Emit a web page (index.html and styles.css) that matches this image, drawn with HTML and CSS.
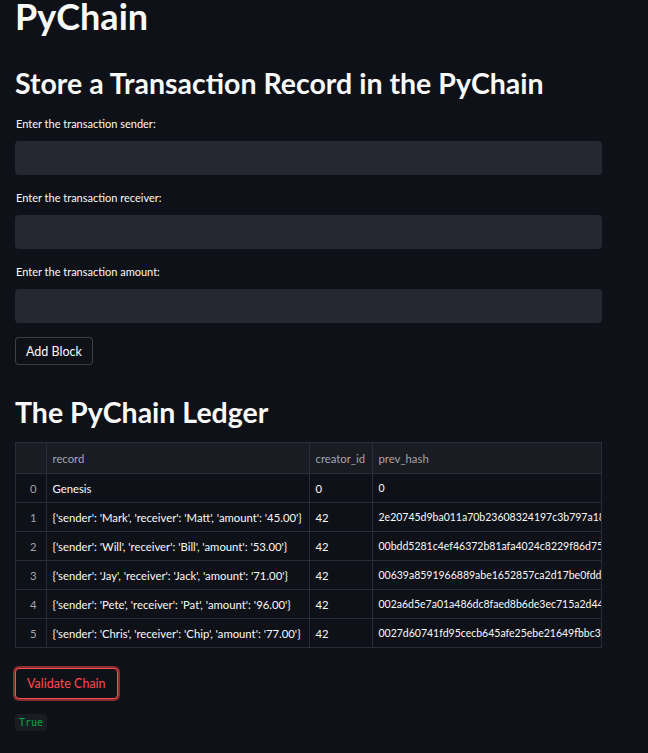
FILE: index.html
```html
<!DOCTYPE html>
<html>
<head>
<meta charset="utf-8">
<link rel="stylesheet" href="styles.css">
</head>
<body>
<main class="app">
  <h1 class="title">PyChain</h1>
  <h2 class="subtitle">Store a Transaction Record in the PyChain</h2>
  <div class="field first">
    <label class="label">Enter the transaction sender:</label>
    <div class="input"></div>
  </div>
  <div class="field">
    <label class="label">Enter the transaction receiver:</label>
    <div class="input"></div>
  </div>
  <div class="field">
    <label class="label">Enter the transaction amount:</label>
    <div class="input"></div>
  </div>
  <button class="btn">Add Block</button>
  <h2 class="subtitle ledger">The PyChain Ledger</h2>
  <div class="table-wrap">
    <table class="grid">
      <colgroup><col class="c-idx"><col class="c-rec"><col class="c-cre"><col class="c-hash"></colgroup>
      <thead>
        <tr><th></th><th>record</th><th>creator_id</th><th>prev_hash</th></tr>
      </thead>
      <tbody>
        <tr><td class="idx">0</td><td>Genesis</td><td>0</td><td class="hash">0</td></tr>
        <tr><td class="idx">1</td><td>{'sender': 'Mark', 'receiver': 'Matt', 'amount': '45.00'}</td><td>42</td><td class="hash">2e20745d9ba011a70b23608324197c3b797a18e4</td></tr>
        <tr><td class="idx">2</td><td>{'sender': 'Will', 'receiver': 'Bill', 'amount': '53.00'}</td><td>42</td><td class="hash">00bdd5281c4ef46372b81afa4024c8229f86d759a</td></tr>
        <tr><td class="idx">3</td><td>{'sender': 'Jay', 'receiver': 'Jack', 'amount': '71.00'}</td><td>42</td><td class="hash">00639a8591966889abe1652857ca2d17be0fdd3b</td></tr>
        <tr><td class="idx">4</td><td>{'sender': 'Pete', 'receiver': 'Pat', 'amount': '96.00'}</td><td>42</td><td class="hash">002a6d5e7a01a486dc8faed8b6de3ec715a2d44c</td></tr>
        <tr><td class="idx">5</td><td>{'sender': 'Chris', 'receiver': 'Chip', 'amount': '77.00'}</td><td>42</td><td class="hash">0027d60741fd95cecb645afe25ebe21649fbbc3fa</td></tr>
      </tbody>
    </table>
  </div>
  <button class="btn btn-focus">Validate Chain</button>
  <div class="result"><code class="code">True</code></div>
</main>
</body>
</html>
```
FILE: styles.css
```css
html, body {
  margin: 0;
  padding: 0;
  background: #0e1117;
  color: #fafafa;
  font-family: Lato, "Noto Sans", sans-serif;
}
.app {
  width: 587px;
  padding: 0 0 0 15px;
  display: flex;
  flex-direction: column;
  align-items: flex-start;
}
.title {
  margin: 0;
  font-size: 36px;
  font-weight: 700;
  line-height: 32px;
  height: 40px;
}
.subtitle {
  margin: 26px 0 0 0;
  font-size: 28.5px;
  font-weight: 700;
  line-height: 34px;
}
.field {
  display: flex;
  flex-direction: column;
  width: 100%;
}
.label {
  font-size: 11px;
  line-height: 14px;
  margin: 16px 0 10px 1px;
}
.field.first .label { margin-top: 17px; }
.input {
  height: 34px;
  background: #262730;
  border-radius: 4px;
}
.btn {
  font-family: Lato, "Noto Sans", sans-serif;
  font-size: 12.5px;
  color: #fafafa;
  background: #0e1117;
  border: 1px solid rgba(250,250,250,0.2);
  border-radius: 4px;
  height: 28px;
  padding: 0 10px;
  margin-top: 14px;
}
.ledger {
  margin-top: 30px;
}
.table-wrap {
  margin-top: 13px;
  width: 585px;
  border: 1px solid #2b2d36;
  overflow: hidden;
}
.grid {
  border-collapse: collapse;
  table-layout: fixed;
  width: 587px;
  font-size: 11.3px;
}
.c-idx { width: 30px; }
.c-rec { width: 263px; }
.c-cre { width: 63px; }
.c-hash { width: 231px; }
.grid th, .grid td {
  border: 1px solid #2b2d36;
  padding: 0 6px;
  white-space: nowrap;
  overflow: hidden;
  text-align: left;
}
.grid tr:first-child th, .grid tr:first-child td { border-top: 0; }
.grid th:first-child, .grid td:first-child { border-left: 0; }
.grid th {
  height: 30px;
  background: #1a1c24;
  color: #a3a5ab;
  font-weight: 400;
}
.grid td {
  height: 28px;
}
.grid td.hash {
  font-size: 10.5px;
}
.grid tbody tr:last-child td { border-bottom: 0; }
.grid td.idx {
  text-align: right;
  color: #a3a5ab;
  padding-right: 9px;
}
.btn-focus {
  margin-top: 20px;
  color: #ff4b4b;
  border-color: #ff4b4b;
  box-shadow: 0 0 0 2px rgba(255, 75, 75, 0.5);
  height: 31px;
  padding: 0 11px;
}
.result {
  margin-top: 15px;
  display: flex;
}
.code {
  display: block;
  font-family: "DejaVu Sans Mono", monospace;
  font-size: 10px;
  color: #09ab3b;
  background: #1a1c23;
  border-radius: 3px;
  padding: 3px 4px;
  line-height: 11px;
}
```
